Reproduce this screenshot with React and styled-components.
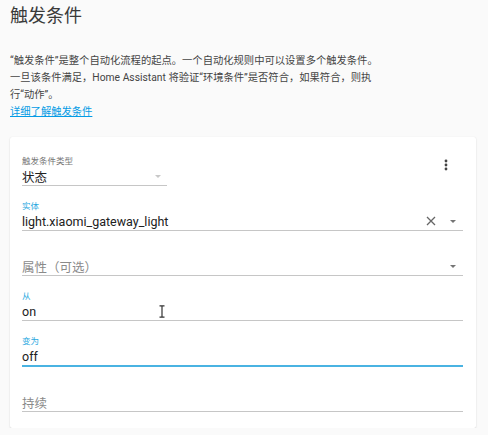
import React from "react";
import styled, { createGlobalStyle } from "styled-components";

const GlobalStyle = createGlobalStyle`
    body {
        margin: 0;
        background-color: #fafafa;
        font-family: Roboto, "Noto Sans CJK SC", sans-serif;
        color: #212121;
    }
`

const Page = styled.div`
    padding: 4px 12px 0 10px;
`

const Title = styled.h1`
    margin: 0;
    font-size: 18px;
    line-height: 24px;
    font-weight: 400;
    color: #3a3a3a;
`

const Intro = styled.p`
    margin: 24px 0 0;
    font-size: 10.3px;
    line-height: 17px;
    color: #444;
`

const Link = styled.a`
    color: #039be5;
    text-decoration: underline;
`

const Card = styled.div`
    margin-top: 17px;
    background: #fff;
    border-radius: 2px;
    box-shadow: 0 1px 2px rgba(0, 0, 0, 0.12), 0 0 1px rgba(0, 0, 0, 0.1);
    padding: 19px 13px 16px 12px;
    display: flex;
    flex-direction: column;
    gap: 15px;
    position: relative;
`

const TopRow = styled.div`
    display: flex;
    justify-content: space-between;
    align-items: flex-start;
`

const Field = styled.div`
    width: ${p => p.width || "auto"};
    display: flex;
    flex-direction: column;
`

const Label = styled.div`
    height: 11px;
    font-size: 8.5px;
    line-height: 11px;
    color: ${p => p.focused ? "#29a8e0" : "#757575"};
`

const Control = styled.div`
    height: 18px;
    display: flex;
    align-items: center;
    border-bottom: ${p => p.focused ? "2px solid #4ab3e2" : "1px solid #c6c6c6"};
`

const Value = styled.span`
    flex: 1;
    font-size: 12.5px;
    color: ${p => p.placeholder ? "#8a8a8a" : "#212121"};
`

const Arrow = styled.span`
    width: 0;
    height: 0;
    border-left: 3.5px solid transparent;
    border-right: 3.5px solid transparent;
    border-top: 3.5px solid ${p => p.light ? "#c8c8c8" : "#757575"};
    margin: 0 ${p => p.right || 6}px 0 ${p => p.left || 6}px;
`

const IconButton = styled.div`
    width: 34px;
    height: 18px;
    display: flex;
    align-items: center;
    justify-content: center;
    color: #444;
`

const Cursor = styled.svg`
    position: absolute;
    left: 149px;
    top: 168px;
`

const Dots = () => (
    <svg width="4" height="12" viewBox="0 0 4 12">
        <circle cx="2" cy="2" r="1.4" fill="currentColor" />
        <circle cx="2" cy="6" r="1.4" fill="currentColor" />
        <circle cx="2" cy="10" r="1.4" fill="currentColor" />
    </svg>
)

const Clear = () => (
    <svg width="10" height="10" viewBox="0 0 10 10">
        <path d="M1 1 L9 9 M9 1 L1 9" stroke="#666" strokeWidth="1.3" />
    </svg>
)

const App = () => {
    return (
        <Page>
            <GlobalStyle />
            <Title>触发条件</Title>
            <Intro>
                “触发条件”是整个自动化流程的起点。一个自动化规则中可以设置多个触发条件。<br />
                一旦该条件满足，Home Assistant 将验证“环境条件”是否符合，如果符合，则执<br />
                行“动作”。<br />
                <Link href="#">详细了解触发条件</Link>
            </Intro>

            <Card>
                <TopRow>
                    <Field width="145px">
                        <Label>触发条件类型</Label>
                        <Control>
                            <Value>状态</Value>
                            <Arrow light right={6} />
                        </Control>
                    </Field>
                    <IconButton><Dots /></IconButton>
                </TopRow>

                <Field>
                    <Label focused>实体</Label>
                    <Control>
                        <Value>light.xiaomi_gateway_light</Value>
                        <Clear />
                        <Arrow right={7} left={14} />
                    </Control>
                </Field>

                <Field>
                    <Label />
                    <Control>
                        <Value placeholder>属性（可选）</Value>
                        <Arrow right={7} />
                    </Control>
                </Field>

                <Field>
                    <Label focused>从</Label>
                    <Control>
                        <Value>on</Value>
                    </Control>
                </Field>

                <Field>
                    <Label focused>变为</Label>
                    <Control focused>
                        <Value>off</Value>
                    </Control>
                </Field>

                <Field>
                    <Label />
                    <Control>
                        <Value placeholder>持续</Value>
                    </Control>
                </Field>

                <Cursor width="6" height="13" viewBox="0 0 6 13">
                    <path d="M0.5 0.8 H5.5 M3 0.8 V12.2 M0.5 12.2 H5.5" stroke="#333" strokeWidth="1.2" fill="none" />
                </Cursor>
            </Card>
        </Page>
    )
}

export default App;
